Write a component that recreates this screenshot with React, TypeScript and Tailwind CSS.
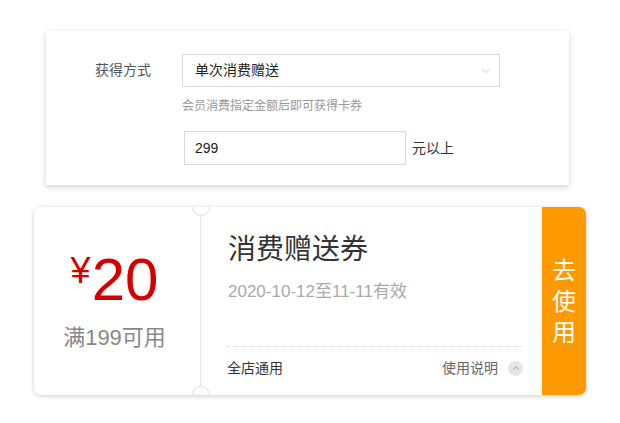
import { ChevronDown, ChevronUp } from "lucide-react";

const font = { fontFamily: '"Liberation Sans", "Noto Sans CJK SC", sans-serif' };

const App = () => {
	return (
		<div className="w-[620px] h-[423px] bg-white overflow-hidden" style={font}>
			{/* --- 获得方式 表单 --- */}
			<div className="ml-[46px] mt-[31px] w-[523px] h-[154px] bg-white shadow-[0_2px_6px_rgba(0,0,0,0.18)] pt-[23px]">
				<div className="flex items-center">
					<div className="w-[136px] pl-[49px] text-[14px] text-[#555]">获得方式</div>
					<div className="w-[318px] h-[33px] border border-[#d9d9d9] flex items-center justify-between pl-[12px] pr-[6px]">
						<span className="text-[14px] text-[#222]">单次消费赠送</span>
						<ChevronDown size={14} strokeWidth={1.2} className="text-[#bbb]" />
					</div>
				</div>
				<div className="ml-[136px] mt-[12px] text-[12px] text-[#999] leading-[14px]">会员消费指定金额后即可获得卡券</div>
				<div className="ml-[138px] mt-[18px] flex items-center">
					<div className="w-[222px] h-[34px] border border-[#d9d9d9] flex items-center pl-[10px] text-[14px] text-[#222]">
						299
					</div>
					<span className="ml-[6px] text-[14px] text-[#333]">元以上</span>
				</div>
			</div>

			{/* --- 优惠券 --- */}
			<div className="relative ml-[34px] mt-[22px] w-[552px] h-[188px] flex rounded-[7px] bg-white overflow-hidden shadow-[0_1px_5px_rgba(0,0,0,0.2)]">
				<div className="w-[167px] flex flex-col items-center pt-[43px] pr-[5px] border-r border-dotted border-[#d8d8d8]">
					<div className="flex items-start text-[#d40000] leading-none">
						<span className="text-[36px] mt-[3px] mr-[1px]">¥</span>
						<span className="text-[60px]">20</span>
					</div>
					<div className="mt-[17px] text-[22px] text-[#888] leading-none">满199可用</div>
				</div>

				<div className="flex-1 flex flex-col pl-[26px] pr-[19px] pb-[18px]">
					<div className="mt-[29px] pl-[1px] text-[28px] text-[#333] leading-none">消费赠送券</div>
					<div className="mt-[19px] pl-[1px] text-[17px] text-[#aaa] leading-none">2020-10-12至11-11有效</div>
					<div className="mt-auto border-t border-dotted border-[#d8d8d8] pt-[12px] flex items-center justify-between leading-[18px]">
						<span className="text-[14px] text-[#333]">全店通用</span>
						<div className="flex items-center">
							<span className="text-[14px] text-[#666]">使用说明</span>
							<span className="ml-[10px] w-[15px] h-[15px] rounded-full bg-[#e6e6e6] flex items-center justify-center">
								<ChevronUp size={10} strokeWidth={1.5} className="text-[#666]" />
							</span>
						</div>
					</div>
				</div>

				<div className="w-[44px] bg-[#ff9900] flex flex-col items-center justify-center text-white text-[24px] leading-[31px]">
					<span>去</span>
					<span>使</span>
					<span>用</span>
				</div>

				<div className="absolute left-[158px] top-[-9px] w-[18px] h-[18px] rounded-full bg-white border border-[#e0e0e0] shadow-[inset_0_1px_2px_rgba(0,0,0,0.08)]" />
				<div className="absolute left-[158px] bottom-[-9px] w-[18px] h-[18px] rounded-full bg-white border border-[#e0e0e0] shadow-[inset_0_-1px_2px_rgba(0,0,0,0.08)]" />
			</div>
		</div>
	);
};

export default App;
